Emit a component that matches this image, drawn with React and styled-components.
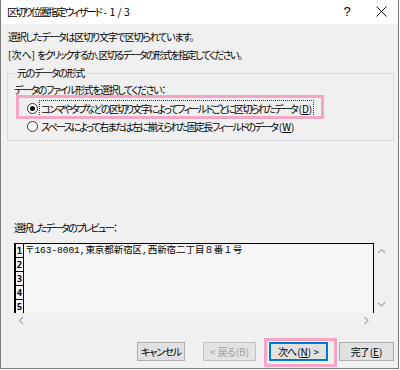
import React from 'react';
import styled, { createGlobalStyle } from 'styled-components';

const GlobalStyle = createGlobalStyle`
  html, body {
    margin: 0;
    padding: 0;
    background: #ffffff;
  }
  body {
    font-family: "Noto Sans CJK JP", "Noto Sans", sans-serif;
  }
`;

const PINK = '#f3a6c6';

const Chevron = ({ dir }) => {
  const paths = {
    up: 'M1 5 L4.5 1.5 L8 5',
    down: 'M1 1.5 L4.5 5 L8 1.5',
    left: 'M5 1 L1.5 4.5 L5 8',
    right: 'M1.5 1 L5 4.5 L1.5 8',
  };
  const vertical = dir === 'up' || dir === 'down';
  return (
    <svg width={vertical ? 9 : 7} height={vertical ? 7 : 9} viewBox={vertical ? '0 0 9 7' : '0 0 7 9'}>
      <path d={paths[dir]} fill="none" stroke="#a8a8a8" strokeWidth="1.1" />
    </svg>
  );
};

const Wizard = () => {
  return (
    <Window>
      <TitleBar>
        <Title>
          区切り位置指定ウィザード<Latin> - 1 / 3</Latin>
        </Title>
        <TitleButton>?</TitleButton>
        <TitleButton>
          <svg width="11" height="11" viewBox="0 0 11 11">
            <path d="M0.5 0.5 L10.5 10.5 M10.5 0.5 L0.5 10.5" stroke="#111" strokeWidth="1" />
          </svg>
        </TitleButton>
      </TitleBar>
      <Body>
        <Message>選択したデータは区切り文字で区切られています。</Message>
        <Message tight>
          <Latin>[次へ] </Latin>をクリックするか、区切るデータの形式を指定してください。
        </Message>
        <GroupBox>
          <Legend>元のデータの形式</Legend>
          <SubLabel>データのファイル形式を選択してください：</SubLabel>
          <Option highlighted>
            <Radio checked />
            <OptionText focused>
              コンマやタブなどの区切り文字によってフィールドごとに区切られたデータ
              <Latin lead={1.5}>
                (<u>D</u>)
              </Latin>
            </OptionText>
          </Option>
          <Option>
            <Radio />
            <OptionText>
              スペースによって右または左に揃えられた固定長フィールドのデータ
              <Latin lead={1.5}>
                (<u>W</u>)
              </Latin>
            </OptionText>
          </Option>
        </GroupBox>
        <PreviewLabel>選択したデータのプレビュー：</PreviewLabel>
        <Preview>
          <DataArea>
            <RowNumbers>
              {[1, 2, 3, 4, 5, ''].map((n, i) => (
                <RowNumber key={i}>{n}</RowNumber>
              ))}
            </RowNumbers>
            <DataLines>
              <DataLine>〒163-8001,東京都新宿区,西新宿二丁目８番１号</DataLine>
            </DataLines>
          </DataArea>
          <VScroll>
            <Chevron dir="up" />
            <Chevron dir="down" />
          </VScroll>
          <HScroll>
            <Chevron dir="left" />
            <Chevron dir="right" />
          </HScroll>
          <Corner />
        </Preview>
        <ButtonRow>
          <Button width={48} gap={18}>キャンセル</Button>
          <Button width={53} gap={13} disabled>
            <Latin>&lt; </Latin>戻る<Latin lead={1}>(B)</Latin>
          </Button>
          <Button width={59} gap={11} focused>
            次へ
            <Latin lead={1}>
              (<u>N</u>) &gt;
            </Latin>
          </Button>
          <Button width={55}>
            完了
            <Latin lead={1}>
              (<u>E</u>)
            </Latin>
          </Button>
        </ButtonRow>
      </Body>
    </Window>
  );
};

export default function App() {
  return (
    <>
      <GlobalStyle />
      <Wizard />
    </>
  );
}

const Window = styled.div`
  width: 399px;
  height: 369px;
  box-sizing: border-box;
  border: 1px solid #7b7b7b;
  border-top: none;
  background: #f0f0f0;
  display: flex;
  flex-direction: column;
  color: #000;
  font-feature-settings: "palt";
`;

const Latin = styled.span`
  letter-spacing: 0;
  white-space: pre;
  margin-left: ${({ lead }) => lead || 0}px;
`;

const TitleBar = styled.div`
  height: 24px;
  flex: none;
  background: #ffffff;
  display: flex;
  align-items: center;
  padding-left: 6px;
`;

const Title = styled.div`
  font-size: 10.5px;
  letter-spacing: -2px;
  flex: 1;
  padding-bottom: 2px;
`;

const TitleButton = styled.div`
  width: 34px;
  height: 24px;
  display: flex;
  align-items: center;
  justify-content: center;
  font-family: "Liberation Sans", sans-serif;
  font-size: 13px;
  padding-bottom: 2px;
  box-sizing: border-box;
`;

const Body = styled.div`
  flex: 1;
  display: flex;
  flex-direction: column;
  padding: 4px 4px 0 6px;
  font-size: 10px;
  letter-spacing: -1.3px;
`;

const Message = styled.div`
  line-height: 18px;
  padding-left: 1px;
  letter-spacing: ${({ tight }) => (tight ? '-1.6px' : '-1.2px')};
`;

const GroupBox = styled.fieldset`
  margin: 2px 0 0 0;
  padding: 0 0 6px 6px;
  border: 1px solid #dcdcdc;
  min-width: 0;
`;

const Legend = styled.legend`
  padding: 0 2px;
  margin-left: 1px;
  line-height: 14px;
`;

const SubLabel = styled.div`
  line-height: 14px;
  margin-top: 3px;
  letter-spacing: -1.4px;
`;

const Option = styled.div`
  position: relative;
  display: flex;
  align-items: center;
  height: 16px;
  padding-left: 13px;
  margin-top: ${({ highlighted }) => (highlighted ? '3px' : '2px')};

  ${({ highlighted }) =>
    highlighted &&
    `
    &::after {
      content: "";
      position: absolute;
      left: 2px;
      top: -5px;
      width: 308px;
      height: 24px;
      box-sizing: border-box;
      border: 3px solid ${PINK};
      pointer-events: none;
    }
  `}
`;

const Radio = styled.span`
  width: 11px;
  height: 11px;
  box-sizing: border-box;
  border-radius: 50%;
  border: 1px solid #333;
  background: #fff;
  margin-right: 2px;
  display: flex;
  align-items: center;
  justify-content: center;

  &::before {
    content: "";
    width: 5px;
    height: 5px;
    border-radius: 50%;
    background: ${({ checked }) => (checked ? '#111' : 'transparent')};
  }
`;

const OptionText = styled.span`
  line-height: 15px;
  padding: 0 1px;
  letter-spacing: -1.66px;
  outline: ${({ focused }) => (focused ? '1px dotted #333' : 'none')};
  white-space: nowrap;
`;

const PreviewLabel = styled.div`
  margin-top: 80px;
  padding-left: 7px;
  line-height: 14px;
  letter-spacing: -1.7px;
`;

const Preview = styled.div`
  margin: 8px 0 0 7px;
  width: 375px;
  height: 84px;
  display: grid;
  grid-template-columns: 1fr 15px;
  grid-template-rows: 70px 14px;
  letter-spacing: 0;
`;

const DataArea = styled.div`
  background: #f6f6f6;
  border-top: 1px solid #000;
  border-right: 1px solid #000;
  display: flex;
  overflow: hidden;
`;

const RowNumbers = styled.div`
  width: 7px;
  flex: none;
  border-left: 2px solid #000;
  border-right: 1px solid #000;
  display: flex;
  flex-direction: column;
`;

const RowNumber = styled.div`
  height: 13px;
  flex: none;
  border-bottom: 1px solid #000;
  font-family: "DejaVu Sans Mono", monospace;
  font-weight: bold;
  font-size: 9px;
  line-height: 14px;
  text-align: center;
`;

const DataLines = styled.div`
  padding-left: 1px;
`;

const DataLine = styled.div`
  font-family: "Liberation Mono", "Noto Sans CJK JP", monospace;
  font-feature-settings: normal;
  font-size: 9.45px;
  line-height: 14px;
  white-space: nowrap;
`;

const VScroll = styled.div`
  display: flex;
  flex-direction: column;
  justify-content: space-between;
  align-items: center;
  padding: 5px 0;
`;

const HScroll = styled.div`
  display: flex;
  justify-content: space-between;
  align-items: center;
  padding: 0 4px;
`;

const Corner = styled.div``;

const ButtonRow = styled.div`
  display: flex;
  justify-content: flex-end;
  margin-top: 15px;
`;

const Button = styled.div`
  position: relative;
  width: ${({ width }) => width}px;
  height: 19px;
  box-sizing: border-box;
  margin-right: ${({ gap }) => gap || 0}px;
  display: flex;
  align-items: center;
  justify-content: center;
  background: ${({ disabled }) => (disabled ? '#e3e3e3' : '#e1e1e1')};
  border: 1px solid ${({ disabled, focused }) => (focused ? '#0078d7' : disabled ? '#c2c2c2' : '#adadad')};
  box-shadow: ${({ focused }) => (focused ? 'inset 0 0 0 1px #0078d7' : 'none')};
  color: ${({ disabled }) => (disabled ? '#a0a0a0' : '#000')};
  letter-spacing: -1px;
  white-space: nowrap;

  ${({ focused }) =>
    focused &&
    `
    &::after {
      content: "";
      position: absolute;
      left: -6px;
      top: -5px;
      right: -10px;
      bottom: -7px;
      border: 3px solid ${PINK};
      pointer-events: none;
    }
  `}
`;
